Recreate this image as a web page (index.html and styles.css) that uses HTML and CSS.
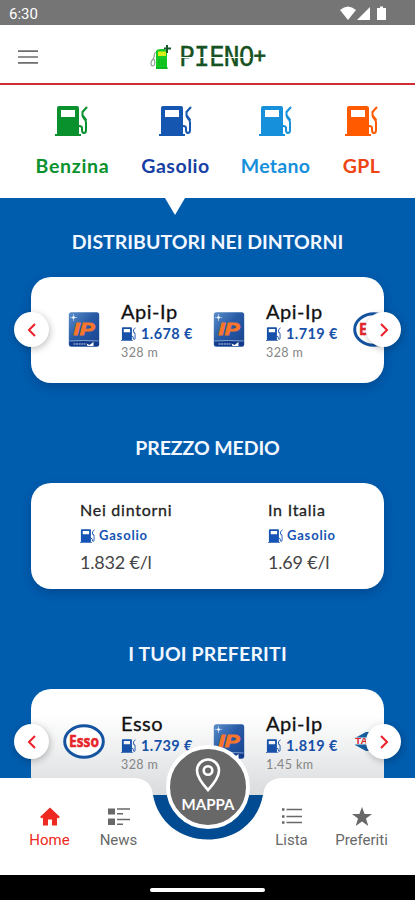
FILE: index.html
```html
<!DOCTYPE html>
<html lang="it">
<head>
<meta charset="utf-8">
<title>Pieno+</title>
<link rel="stylesheet" href="styles.css">
</head>
<body>
<svg class="defs" width="0" height="0" aria-hidden="true">
  <defs>
    <symbol id="pump" viewBox="0 0 33 30">
      <path fill="currentColor" fill-rule="evenodd" d="M2 2Q2 0 4 0H22Q24 0 24 2V28H26V30H0V28H2ZM6 4V11H20V4Z"/>
      <path fill="none" stroke="currentColor" stroke-width="2" d="M24 20Q27 20 27 22V24Q27 27 29 27Q31 27 31 24V16.500Q31 14 29 12.500Q27.500 11 27.500 9V6L32 1"/>
      <path fill="none" stroke="currentColor" stroke-width="1.500" d="M28 9.500L31.500 14"/>
    </symbol>
    <linearGradient id="ipg" x1="0" y1="0" x2="1" y2="1"><stop offset="0" stop-color="#5b8fc9"/><stop offset=".45" stop-color="#285ba6"/><stop offset="1" stop-color="#17428e"/></linearGradient>
    <symbol id="ip" viewBox="0 0 31 35">
      <rect x=".3" y=".3" width="30.400" height="34.400" rx="2.500" fill="url(#ipg)"/>
      <path d="M1 29H30V32Q30 34 28 34H3Q1 34 1 32Z" fill="#123a8c"/>
      <path d="M1 29Q15 28 30 29" stroke="#9db9de" stroke-width=".8" fill="none"/>
      <path d="M5 2V9M1.500 5.500H8.500" stroke="#dceaff" stroke-width=".6"/>
      <circle cx="5" cy="5.500" r="1.300" fill="#fff"/>
      <path d="M5 32H17" stroke="#c3d2ea" stroke-width="1" stroke-dasharray="2 .6"/>
      <path d="M18 31.500L21 33L25 30V34H19Z" fill="#fff"/>
      <text x="15.500" y="22.500" text-anchor="middle" textLength="21" lengthAdjust="spacingAndGlyphs" font-family="Liberation Sans" font-weight="bold" font-style="italic" font-size="16.500" fill="#f8752b" stroke="#f8752b" stroke-width=".8">IP</text>
    </symbol>
    <symbol id="esso" viewBox="0 0 42 35">
      <ellipse cx="21" cy="17.500" rx="19.300" ry="15.700" fill="#fff" stroke="#14539f" stroke-width="3"/>
      <text x="21" y="23" text-anchor="middle" textLength="30" lengthAdjust="spacingAndGlyphs" font-family="Open Sans" font-weight="bold" font-size="16.500" fill="#e5252b" stroke="#e5252b" stroke-width=".5">Esso</text>
    </symbol>
    <symbol id="tamoil" viewBox="0 0 42 35">
      <path d="M2 14L13 8H30L40 14V21L30 27H13L2 21Z" fill="#17609f"/>
      <path d="M0 13.500H42V20.500H0Z" fill="#f1f4f8"/>
      <text x="2" y="20" textLength="38" lengthAdjust="spacingAndGlyphs" font-family="Liberation Sans" font-weight="bold" font-size="8.500" fill="#df2830">TAMOIL</text>
    </symbol>
    <symbol id="left" viewBox="0 0 10 16"><path d="M8 2L2 8L8 14" fill="none" stroke="#ee1f27" stroke-width="2"/></symbol>
    <symbol id="right" viewBox="0 0 10 16"><path d="M2 2L8 8L2 14" fill="none" stroke="#ee1f27" stroke-width="2"/></symbol>
  </defs>
</svg>
<div class="phone">
  <div class="status">
    <span>6:30</span>
    <svg width="48" height="16" viewBox="0 0 48 16" fill="#fff">
      <path d="M1 4Q9-3 17 4L9 14Z"/><path d="M18 14L31 1V14Z"/><path d="M38 2H41V.5H44V2H47V14H38Z"/>
    </svg>
  </div>
  <header class="header">
    <svg class="burger" width="20" height="14" viewBox="0 0 20 14"><path d="M0 1.200H20M0 7H20M0 12.800H20" stroke="#6d6d6d" stroke-width="1.700"/></svg>
    <div class="brand">
      <svg width="22" height="26" viewBox="0 0 22 26">
        <path d="M7 8Q4 8 4 13Q3 16 1.500 17Q0 22 3 22Q6 21 4 15" fill="none" stroke="#92a292" stroke-width="1.200"/>
        <path d="M6 7Q7 5 11 5H14Q17 6 17 9V24H6Z" fill="#16cb23"/>
        <path d="M6 23H17.500V25H6Z" fill="#0db61d"/>
        <path d="M8 7.500H16V12H8Z" fill="#d9ee16"/>
        <path d="M9 15V22M12 15V22M15 15V22" stroke="#07a815" stroke-width=".6"/>
        <path d="M17 1V9M14 4.500H21" stroke="#16582a" stroke-width="2"/>
      </svg>
      <span class="wordmark">PIENO<i>+</i></span>
    </div>
  </header>
  <nav class="fuels">
    <div class="fuel benzina"><svg><use href="#pump"/></svg><span>Benzina</span></div>
    <div class="fuel gasolio"><svg><use href="#pump"/></svg><span>Gasolio</span></div>
    <div class="fuel metano"><svg><use href="#pump"/></svg><span>Metano</span></div>
    <div class="fuel gpl"><svg><use href="#pump"/></svg><span>GPL</span></div>
  </nav>
  <main class="main">
    <section>
      <h2>DISTRIBUTORI NEI DINTORNI</h2>
      <div class="wrap">
        <div class="card stations">
          <div class="station"><svg class="logo"><use href="#ip"/></svg><div class="info"><b>Api-Ip</b><span class="price"><svg><use href="#pump"/></svg>1.678 €</span><small>328 m</small></div></div>
          <div class="station"><svg class="logo"><use href="#ip"/></svg><div class="info"><b>Api-Ip</b><span class="price"><svg><use href="#pump"/></svg>1.719 €</span><small>328 m</small></div></div>
          <div class="station"><svg class="logo"><use href="#esso"/></svg></div>
        </div>
        <div class="arrow prev"><svg><use href="#left"/></svg></div>
        <div class="arrow next"><svg><use href="#right"/></svg></div>
      </div>
    </section>
    <section>
      <h2 class="medium">PREZZO MEDIO</h2>
      <div class="card averages">
        <div class="average"><span class="place">Nei dintorni</span><span class="kind"><svg><use href="#pump"/></svg>Gasolio</span><span class="value">1.832 €/l</span></div>
        <div class="average"><span class="place">In Italia</span><span class="kind"><svg><use href="#pump"/></svg>Gasolio</span><span class="value">1.69 €/l</span></div>
      </div>
    </section>
    <section>
      <h2 class="favourites">I TUOI PREFERITI</h2>
      <div class="wrap">
        <div class="card stations faded">
          <div class="station"><svg class="logo"><use href="#esso"/></svg><div class="info"><b>Esso</b><span class="price"><svg><use href="#pump"/></svg>1.739 €</span><small>328 m</small></div></div>
          <div class="station"><svg class="logo"><use href="#ip"/></svg><div class="info"><b>Api-Ip</b><span class="price"><svg><use href="#pump"/></svg>1.819 €</span><small>1.45 km</small></div></div>
          <div class="station"><svg class="logo"><use href="#tamoil"/></svg></div>
        </div>
        <div class="arrow prev"><svg><use href="#left"/></svg></div>
        <div class="arrow next"><svg><use href="#right"/></svg></div>
      </div>
    </section>
  </main>
  <footer class="bottom">
    <svg class="shape" width="415" height="97" viewBox="0 0 415 97"><path d="M0 0H133Q151 0 153 17C158 44 180 61.500 208 61.500C236 61.500 258 44 263 17Q265 0 283 0H415V97H0Z" fill="#fff"/></svg>
    <div class="tabs">
      <div class="tab home"><svg viewBox="0 0 20 18"><path d="M10 0L20 9.500L18 11L17 10V18H12V12H8V18H3V10L2 11L0 9.500Z" fill="currentColor"/></svg><span>Home</span></div>
      <div class="tab news"><svg viewBox="0 0 22 18"><path d="M0 1H7V7H0ZM0 11H7V17.500H0Z" fill="currentColor"/><path d="M9 1.500H22M9 6.200H15M9 12H22M9 16.700H15" stroke="currentColor" stroke-width="1.600"/></svg><span>News</span></div>
      <div></div>
      <div class="tab"><svg viewBox="0 0 20 18"><path d="M0 2H2.500M0 9H2.500M0 15H2.500" stroke="currentColor" stroke-width="2.500"/><path d="M4.500 2H20M4.500 9H20M4.500 15H20" stroke="currentColor" stroke-width="1.600"/></svg><span>Lista</span></div>
      <div class="tab"><svg viewBox="0 0 20 19"><path d="M10 0L12.600 7H20L14 11.500L16.300 19L10 14.500L3.700 19L6 11.500L0 7H7.400Z" fill="currentColor"/></svg><span>Preferiti</span></div>
    </div>
    <div class="map">
      <svg width="26" height="34" viewBox="0 0 26 34" fill="none" stroke="#fff" stroke-width="2.600"><path d="M13 32Q2 20 2 12.500A11 11 0 0 1 24 12.500Q24 20 13 32Z"/><circle cx="13" cy="12.500" r="4.300"/></svg>
      <span>MAPPA</span>
    </div>
  </footer>
  <div class="gesture"><i></i></div>
</div>
</body>
</html>
```
FILE: styles.css
```css
* { box-sizing: border-box; }
body { margin: 0; font-family: Lato, "Open Sans", sans-serif; }
svg { display: block; flex: none; }
.defs { position: absolute; }
.phone { width: 415px; height: 900px; display: flex; flex-direction: column; overflow: hidden; background: #fff; }
.status { flex: none; height: 25px; background: #757575; color: #fff; display: flex; justify-content: space-between; padding: 6px 28px 0 9px; font: 15px/16px Roboto, sans-serif; }
.header { flex: none; height: 60px; border-bottom: 2px solid #d02c35; display: flex; align-items: center; padding: 5px 0 0 18px; }
.brand { display: flex; align-items: center; margin-left: 112px; gap: 7px; height: 28px; }
.wordmark { position: relative; display: flex; font: 26px/26px "DejaVu Sans Mono", monospace; letter-spacing: -.7px; color: #175222; -webkit-text-stroke: .3px #175222; }
.wordmark::after { content: ""; position: absolute; left: 0; right: 14px; top: 13px; height: 1px; background: #fff; }
.wordmark i { font-style: normal; font-size: 20px; line-height: 23px; -webkit-text-stroke: .8px #175222; }
.fuels { flex: none; height: 113px; display: grid; grid-template-columns: 103px 103px 97px 75px; padding: 21px 0 0 21px; }
.fuel { display: flex; flex-direction: column; align-items: center; gap: 18px; font-size: 19.500px; line-height: 24px; font-weight: 700; }
.fuel svg { width: 33px; height: 30px; }
.benzina svg { margin-right: 2px; }
.benzina { color: #08912d; letter-spacing: .7px; }
.gasolio { color: #1556b0; letter-spacing: .5px; }
.gasolio span { color: #173fa5; }
.metano { color: #1690db; letter-spacing: .3px; }
.gpl { color: #ff5a00; letter-spacing: .3px; }
.gpl span { color: #ee4313; }
.main { position: relative; flex: none; height: 650px; overflow: hidden; background: linear-gradient(#005cad 596px, #004b91 597px); padding: 30px 31px 0; }
.main::before { content: ""; position: absolute; left: 165px; top: 0; border: solid transparent; border-width: 17px 10.500px 0; border-top-color: #fff; }
h2 { margin: 0 0 21px; height: 28px; line-height: 28px; text-align: center; font-size: 19.500px; font-weight: 700; color: #f3f7ff; white-space: nowrap; }
.medium { letter-spacing: -.1px; }
.favourites { letter-spacing: .15px; }
section { height: 206px; }
.wrap { position: relative; }
.card { width: 353px; height: 106px; border-radius: 20px; background: #fff; box-shadow: 0 4px 10px rgba(0, 35, 90, .3); overflow: hidden; }
.faded { background: linear-gradient(#fff 25%, #d9dbdd); border-radius: 20px 20px 0 0; box-shadow: none; }
.stations { display: flex; padding-left: 32px; }
.station { width: 145px; flex: none; display: flex; gap: 16px; padding-top: 35px; }
.logo { width: 42px; height: 35px; }
.info { display: flex; flex-direction: column; margin-top: -13px; color: #111; }
.info b { font-weight: 400; font-size: 20px; line-height: 24px; letter-spacing: .5px; -webkit-text-stroke: .3px #111; }
.price { display: flex; gap: 5px; align-items: center; color: #1650a8; font-weight: 700; font-size: 14.500px; line-height: 21px; letter-spacing: .4px; white-space: nowrap; }
.price svg, .kind svg { width: 15px; height: 14px; }
.info small { color: #858585; font-size: 12.500px; line-height: 17px; letter-spacing: .4px; }
.arrow { position: absolute; top: 35px; width: 35px; height: 35px; border-radius: 50%; background: #fff; display: grid; place-items: center; box-shadow: 1px 2px 7px rgba(0, 0, 0, .25); }
.arrow svg { width: 10px; height: 16px; }
.prev { left: -17px; }
.next { right: -17px; }
.averages { display: grid; grid-template-columns: 188px 1fr; padding: 15px 0 0 49px; }
.average { display: flex; flex-direction: column; color: #222; }
.place { font-size: 16px; line-height: 24px; letter-spacing: .75px; -webkit-text-stroke: .3px #222; }
.kind { display: flex; align-items: center; gap: 4px; color: #1553b4; font-weight: 700; font-size: 13px; line-height: 27px; letter-spacing: .8px; }
.value { font-size: 18px; line-height: 26px; color: #444; letter-spacing: -.2px; }
.bottom { position: relative; z-index: 1; flex: none; height: 97px; margin-top: -70px; }
.shape { position: absolute; inset: 0; }
.tabs { position: relative; display: grid; grid-template-columns: 69px 69px 104px 69px 71px; padding: 29px 0 0 15px; }
.tab { display: flex; flex-direction: column; align-items: center; gap: 5px; color: #686868; font: 15px/18px Roboto, sans-serif; }
.tab svg { width: 20px; height: 19px; }
.news svg { width: 22px; }
.home { color: #ed2921; }
.map { position: absolute; left: 166px; top: -33px; width: 84px; height: 84px; border-radius: 50%; border: 4px solid #fff; background: #686868; display: flex; flex-direction: column; align-items: center; padding-top: 9px; color: #fff; font-weight: 700; font-size: 15px; line-height: 24px; }
.gesture { flex: none; height: 25px; background: #000; display: flex; justify-content: center; padding-top: 13px; }
.gesture i { width: 115px; height: 4px; border-radius: 2px; background: #fff; }
```
